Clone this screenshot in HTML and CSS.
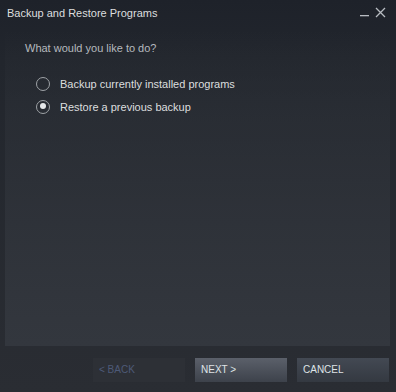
FILE: index.html
```html
<!DOCTYPE html>
<html>
<head>
<meta charset="utf-8">
<link rel="stylesheet" href="styles.css">
</head>
<body>
<div class="window">
  <div class="titlebar">
    <div class="title">Backup and Restore Programs</div>
    <div class="controls">
      <svg class="min" width="9" height="10" viewBox="0 0 9 10"><rect x="0" y="8" width="9" height="1.3" fill="#b8bcc2"/></svg>
      <svg class="close" width="11" height="11" viewBox="0 0 11 11"><path d="M1 1L10 10M10 1L1 10" stroke="#b8bcc2" stroke-width="1.3"/></svg>
    </div>
  </div>
  <div class="panel">
    <div class="question">What would you like to do?</div>
    <div class="options">
      <div class="option"><span class="radio"></span><span class="label">Backup currently installed programs</span></div>
      <div class="option"><span class="radio checked"></span><span class="label">Restore a previous backup</span></div>
    </div>
  </div>
  <div class="buttons">
    <div class="btn disabled">&lt; BACK</div>
    <div class="btn primary">NEXT &gt;</div>
    <div class="btn">CANCEL</div>
  </div>
</div>
</body>
</html>
```
FILE: styles.css
```css
html, body {
  margin: 0;
  padding: 0;
}
body {
  width: 396px;
  height: 392px;
  overflow: hidden;
  background: #2a2d32;
  font-family: Arial, "Liberation Sans", sans-serif;
}
.window {
  height: 392px;
  display: flex;
  flex-direction: column;
  background: linear-gradient(to bottom, #1e222a 0px, #22262d 60px, #2a2d33 392px);
}
.titlebar {
  height: 30px;
  display: flex;
  justify-content: space-between;
  align-items: flex-start;
  padding: 0 10px 0 7px;
}
.title {
  color: #dcdedf;
  font-size: 11px;
  margin-top: 7px;
}
.controls {
  display: flex;
  gap: 6px;
  margin-top: 7px;
}
.panel {
  margin: 0 6px 0 5px;
  height: 316px;
  background: linear-gradient(to bottom, rgba(40,44,51,0) 0px, rgba(44,48,55,0.6) 80px, #33373e 316px);
  padding: 0 20px;
}
.question {
  color: #b5b9be;
  font-size: 11px;
  margin-top: 12px;
}
.options {
  margin-top: 22px;
  padding-left: 11px;
  display: flex;
  flex-direction: column;
  gap: 8px;
}
.option {
  display: flex;
  align-items: center;
  height: 15px;
}
.radio {
  box-sizing: border-box;
  width: 14px;
  height: 14px;
  border-radius: 50%;
  border: 1.5px solid #9ea2a6;
  margin-right: 10px;
  position: relative;
}
.radio.checked::after {
  content: "";
  position: absolute;
  left: 2.5px;
  top: 2.5px;
  width: 6px;
  height: 6px;
  border-radius: 50%;
  background: #e6e8ea;
}
.label {
  color: #dcdedf;
  font-size: 11px;
}
.buttons {
  display: flex;
  justify-content: flex-end;
  gap: 10px;
  padding: 12px 7px 0 0;
}
.btn {
  width: 92px;
  height: 24px;
  box-sizing: border-box;
  padding-left: 6px;
  font-size: 10px;
  line-height: 24px;
  color: #dfe3e6;
  background: linear-gradient(to bottom, #434953 0%, #343941 100%);
}
.btn.primary {
  background: linear-gradient(to bottom, #5b606a 0%, #3d424b 100%);
}
.btn.disabled {
  background: #2d3036;
  color: #4d5a78;
}
```
